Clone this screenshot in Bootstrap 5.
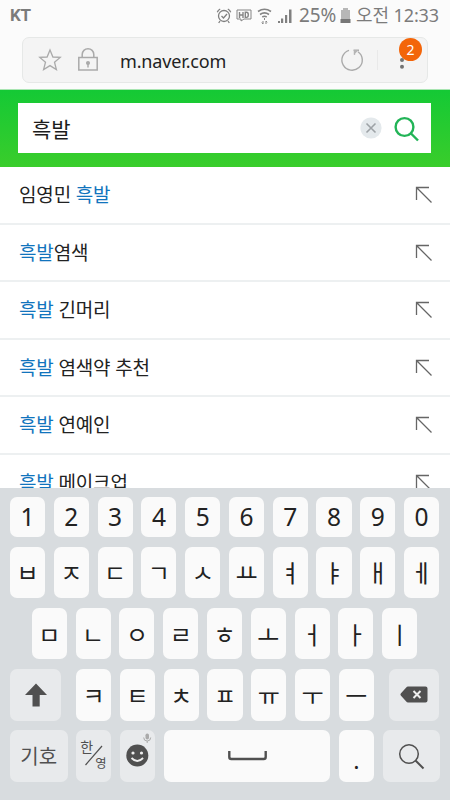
<!DOCTYPE html>
<html lang="ko">
<head>
<meta charset="utf-8">
<meta name="viewport" content="width=device-width, initial-scale=1">
<title>NAVER</title>
<link href="https://cdn.jsdelivr.net/npm/bootstrap@5.3.0/dist/css/bootstrap.min.css" rel="stylesheet">
<style>
  body { width: 450px; height: 800px; background: #fff; font-family: "Noto Sans", "Noto Sans CJK KR", sans-serif; color: #222; }
  svg { display: block; flex: none; }
  .status { height: 31px; background: #fbfbfb; color: #7b7b7b; font-size: 18px; line-height: 31px; padding: 0 11px 0 10px; }
  .carrier { font-family: Roboto, sans-serif; font-weight: 700; font-size: 17px; letter-spacing: -.2px; }
  .signal { margin-left: 5px; }
  .battery-text { font-size: 19px; letter-spacing: -.2px; margin-left: 6px; }
  .clock { letter-spacing: -.1px; margin-left: 5px; }
  .browser { height: 59px; background: #fbfbfb; padding: 6px 22px 7px; border-bottom: 1px solid #a9e5b2; }
  .address { height: 46px; background: #f4f4f4; border: 1px solid #e6e8e7; border-radius: 7px; padding-left: 15px; }
  .url { font-size: 18px; color: #222; letter-spacing: -.15px; padding: 2px 0 0 22px; }
  .divider { width: 1px; height: 20px; background: #e9e9e9; margin-left: 13px; }
  .more { margin-right: 21px; }
  .count { position: absolute; left: 1px; top: -12px; width: 23px; height: 23px; border-radius: 50%; background: #f36509; color: #fff; font-size: 14px; line-height: 23px; }
  .search { height: 77px; background: linear-gradient(#14c935, #3acd2b); padding: 13px 19px 14px 18px; }
  .search-box { background: #fff; padding: 0 9px 0 14px; font-size: 21px; color: #1d1d1d; }
  .query { padding-top: 4px; }
  .results { height: 321px; }
  .result { height: 57.5px; flex: none; border-bottom: 2px solid #edf0f1; padding: 1px 17px 0 19px; font-size: 19px; line-height: 54px; letter-spacing: -.15px; }
  .hit { color: #1174bd; }
  .keyboard { height: 312px; background: #d8dcdf; padding: 9px 11px 18px 10px; }
  .keys { height: 51.5px; gap: 8.7px; margin-bottom: 9.7px; }
  .keys.numbers { height: 40px; }
  .keycap { width: 35.1px; flex: none; background: #fafafa; border-radius: 7px; font-size: 24px; color: #222; line-height: 1; }
  .numbers .keycap { font-size: 24.5px; }
  .jamo .keycap { font-family: "Noto Sans CJK KR", sans-serif; font-weight: 400; }
  .keycap.soft { background: #e8eaec; color: #505050; }
  .keycap.lang { font-size: 14px; }
  .symbols { font-size: 20px; padding-top: 1px; }
  .period { padding-top: 10px; }
</style>
<script src="https://cdn.jsdelivr.net/npm/bootstrap@5.3.0/dist/js/bootstrap.bundle.min.js"></script>
</head>
<body class="overflow-hidden d-flex flex-column">
<svg width="0" height="0" class="position-absolute"><symbol id="fill-arrow" viewBox="0 0 18 18"><path d="M1.500 14V1.500H14M1.500 1.500l15 15" fill="none" stroke="#666" stroke-width="1.300"/></symbol></svg>

<header class="status d-flex align-items-center flex-shrink-0">
  <span class="carrier me-auto">KT</span>
  <svg width="16" height="18" viewBox="0 0 16 18" fill="none" stroke="#808080" stroke-width="1.300"><circle cx="8" cy="9" r="5.500"/><path d="M5.500 9l2 2 3.500-4M1.300 5.200Q2 3 4.200 2M14.700 5.200Q14 3 11.800 2M4 14l-1.300 2M12 14l1.300 2"/></svg>
  <svg class="ms-1" width="16" height="16" viewBox="0 0 16 16" fill="none" stroke="#858585"><path d="M1 2h14v9H8l-3 2v-2H1z"/><path stroke-width="1.400" d="M3.500 4v6M7 4v6M3.500 7H7M9.300 4.200v5.200h1.200c2.400 0 2.400-5.200 0-5.200z"/></svg>
  <svg class="signal" width="15" height="18" viewBox="0 0 15 18" fill="none" stroke="#858585" stroke-width="1.600"><path d="M1 4.500q6.500-4.500 13 0M3 7.500q4.500-3.200 9 0M5.300 10q2.200-1.500 4.400 0"/><path d="M7.500 11v2M6 14v3M4.800 15.500L6 17M9 17v-3M9 14l1.200 1.300" stroke-width="1"/></svg>
  <svg class="signal" width="16" height="16" viewBox="0 0 16 16" fill="#808080"><path d="M1 13h2v2H1zM4 10.500h2.200V15H4zM8 7h2.200v8H8zM12 1.500h2.500V15H12z"/></svg>
  <span class="battery-text">25%</span>
  <svg class="ms-1" width="11" height="17" viewBox="0 0 11 17"><path d="M3 1h5v2h2v9H1V3h2z" fill="#b7b7b7"/><path d="M.5 12h10v4H.5z" fill="#777"/></svg>
  <span class="clock">오전 12:33</span>
</header>

<section class="browser flex-shrink-0">
  <div class="address d-flex align-items-center">
    <svg width="24" height="24" viewBox="0 0 24 24" fill="none" stroke="#aaa" stroke-width="1.300"><path d="M12 2l2.900 7 7.300.4-5.700 4.800 1.900 7.300L12 17.600l-6.400 3.900 1.900-7.300L1.800 9.400 9.100 9z"/></svg>
    <svg class="ms-3" width="20" height="26" viewBox="0 0 20 26" fill="none" stroke="#aaa" stroke-width="1.500"><path d="M.8 10.500h18.400v12.500H.8zM4.200 10.500V7.500a5.800 5.800 0 0 1 11.600 0v3M10 16.500v4"/><circle cx="10" cy="16" r="1.300" fill="#aaa"/></svg>
    <span class="url me-auto">m.naver.com</span>
    <svg width="24" height="24" viewBox="0 0 24 24" fill="none" stroke="#aaa" stroke-width="1.400"><path d="M18 3.700A10.200 10.200 0 1 1 9 2.300M13.500 2.200h5.500M14.500 2.200v4.500"/><path d="M14 2h5l-5 4.500z" fill="#b5b5b5" stroke="none"/></svg>
    <span class="divider me-3"></span>
    <div class="more position-relative ms-1">
      <svg width="8" height="20" viewBox="0 0 8 20" fill="#737373"><circle cx="4" cy="3.500" r="2"/><circle cx="4" cy="10" r="2"/><circle cx="4" cy="16.700" r="2"/></svg>
      <span class="count text-center">2</span>
    </div>
  </div>
</section>

<section class="search flex-shrink-0">
  <div class="search-box h-100 d-flex align-items-center">
    <span class="query me-auto">흑발</span>
    <svg width="22" height="22" viewBox="0 0 22 22"><circle cx="11" cy="11" r="10.600" fill="#e4e9ec"/><path d="M6.500 6.500l9 9m0-9l-9 9" stroke="#9da2a6" stroke-width="1.600"/></svg>
    <svg class="ms-2" width="32" height="30" viewBox="0 0 32 30" fill="none" stroke="#22b457" stroke-width="2.400"><circle cx="14.500" cy="14" r="8.900"/><path d="M21 20.500l7 7"/></svg>
  </div>
</section>

<main class="results overflow-hidden d-flex flex-column flex-shrink-0">
  <div class="result d-flex align-items-center justify-content-between"><span>임영민 <span class="hit">흑발</span></span><svg width="18" height="18"><use href="#fill-arrow"/></svg></div>
  <div class="result d-flex align-items-center justify-content-between"><span><span class="hit">흑발</span>염색</span><svg width="18" height="18"><use href="#fill-arrow"/></svg></div>
  <div class="result d-flex align-items-center justify-content-between"><span><span class="hit">흑발</span> 긴머리</span><svg width="18" height="18"><use href="#fill-arrow"/></svg></div>
  <div class="result d-flex align-items-center justify-content-between"><span><span class="hit">흑발</span> 염색약 추천</span><svg width="18" height="18"><use href="#fill-arrow"/></svg></div>
  <div class="result d-flex align-items-center justify-content-between"><span><span class="hit">흑발</span> 연예인</span><svg width="18" height="18"><use href="#fill-arrow"/></svg></div>
  <div class="result d-flex align-items-center justify-content-between"><span><span class="hit">흑발</span> 메이크업</span><svg width="18" height="18"><use href="#fill-arrow"/></svg></div>
</main>

<section class="keyboard flex-shrink-0">
  <div class="keys numbers d-flex">
    <div class="keycap d-flex align-items-center justify-content-center">1</div>
    <div class="keycap d-flex align-items-center justify-content-center">2</div>
    <div class="keycap d-flex align-items-center justify-content-center">3</div>
    <div class="keycap d-flex align-items-center justify-content-center">4</div>
    <div class="keycap d-flex align-items-center justify-content-center">5</div>
    <div class="keycap d-flex align-items-center justify-content-center">6</div>
    <div class="keycap d-flex align-items-center justify-content-center">7</div>
    <div class="keycap d-flex align-items-center justify-content-center">8</div>
    <div class="keycap d-flex align-items-center justify-content-center">9</div>
    <div class="keycap d-flex align-items-center justify-content-center">0</div>
  </div>
  <div class="keys jamo d-flex">
    <div class="keycap d-flex align-items-center justify-content-center">ㅂ</div>
    <div class="keycap d-flex align-items-center justify-content-center">ㅈ</div>
    <div class="keycap d-flex align-items-center justify-content-center">ㄷ</div>
    <div class="keycap d-flex align-items-center justify-content-center">ㄱ</div>
    <div class="keycap d-flex align-items-center justify-content-center">ㅅ</div>
    <div class="keycap d-flex align-items-center justify-content-center">ㅛ</div>
    <div class="keycap d-flex align-items-center justify-content-center">ㅕ</div>
    <div class="keycap d-flex align-items-center justify-content-center">ㅑ</div>
    <div class="keycap d-flex align-items-center justify-content-center">ㅐ</div>
    <div class="keycap d-flex align-items-center justify-content-center">ㅔ</div>
  </div>
  <div class="keys jamo d-flex justify-content-center">
    <div class="keycap d-flex align-items-center justify-content-center">ㅁ</div>
    <div class="keycap d-flex align-items-center justify-content-center">ㄴ</div>
    <div class="keycap d-flex align-items-center justify-content-center">ㅇ</div>
    <div class="keycap d-flex align-items-center justify-content-center">ㄹ</div>
    <div class="keycap d-flex align-items-center justify-content-center">ㅎ</div>
    <div class="keycap d-flex align-items-center justify-content-center">ㅗ</div>
    <div class="keycap d-flex align-items-center justify-content-center">ㅓ</div>
    <div class="keycap d-flex align-items-center justify-content-center">ㅏ</div>
    <div class="keycap d-flex align-items-center justify-content-center">ㅣ</div>
  </div>
  <div class="keys jamo d-flex justify-content-between">
    <div class="keycap soft d-flex align-items-center justify-content-center" style="width:51px"><svg width="22" height="24" viewBox="0 0 22 24"><path d="M11 .5L22 12h-7.300v11.500H7.500V12H0z" fill="#505050"/></svg></div>
    <div class="d-flex keys m-0">
      <div class="keycap d-flex align-items-center justify-content-center">ㅋ</div>
      <div class="keycap d-flex align-items-center justify-content-center">ㅌ</div>
      <div class="keycap d-flex align-items-center justify-content-center">ㅊ</div>
      <div class="keycap d-flex align-items-center justify-content-center">ㅍ</div>
      <div class="keycap d-flex align-items-center justify-content-center">ㅠ</div>
      <div class="keycap d-flex align-items-center justify-content-center">ㅜ</div>
      <div class="keycap d-flex align-items-center justify-content-center">ㅡ</div>
    </div>
    <div class="keycap soft d-flex align-items-center justify-content-center" style="width:50px"><svg width="28" height="17" viewBox="0 0 28 17"><path d="M8 .5h17.500q2 0 2 2v12q0 2-2 2H8q-1 0-2-1.200L.8 9.500q-.8-1 0-2L6 1.700Q7 .5 8 .5z" fill="#505050"/><path d="M13.500 5l7 7m0-7l-7 7" stroke="#eee" stroke-width="2"/></svg></div>
  </div>
  <div class="keys mb-0 d-flex">
    <div class="keycap soft d-flex align-items-center justify-content-center" style="width:57.500px"><span class="symbols">기호</span></div>
    <div class="keycap soft lang position-relative"><span class="position-absolute" style="left:4px;top:10px">한</span><svg width="35" height="51" viewBox="0 0 35 51"><path d="M9.500 35L26 16" stroke="#505050" stroke-width="1.200"/></svg><span class="position-absolute small" style="left:19px;top:28px">영</span></div>
    <div class="keycap soft"><svg width="35" height="51" viewBox="0 0 35 51" fill="none"><circle cx="17.300" cy="25.500" r="11" fill="#505050"/><circle cx="13" cy="23" r="1.600" fill="#eee"/><circle cx="21.500" cy="23" r="1.600" fill="#eee"/><path d="M11.500 28q5.800 6 11.600 0" stroke="#eee" stroke-width="1.800"/><rect x="25.500" y="3.500" width="3.500" height="6" rx="1.700" fill="#aaa"/><path d="M23.700 7.500q0 3.500 3.500 3.500t3.500-3.500M27.200 11v2" stroke="#aaa"/></svg></div>
    <div class="keycap d-flex align-items-center justify-content-center" style="width:166.500px"><svg width="39" height="10" viewBox="0 0 39 10"><path d="M1.300 0v6q0 2 2 2h32.400q2 0 2-2V0" fill="none" stroke="#505050" stroke-width="2.400"/></svg></div>
    <div class="keycap d-flex align-items-center justify-content-center"><span class="period fs-3">.</span></div>
    <div class="keycap soft d-flex align-items-center justify-content-center" style="width:57px"><svg width="27" height="27" viewBox="0 0 27 27" fill="none" stroke="#505050" stroke-width="1.500"><circle cx="11" cy="11" r="9.300"/><path d="M17.500 17.500l8 8" stroke-width="2"/></svg></div>
  </div>
</section>
</body>
</html>
